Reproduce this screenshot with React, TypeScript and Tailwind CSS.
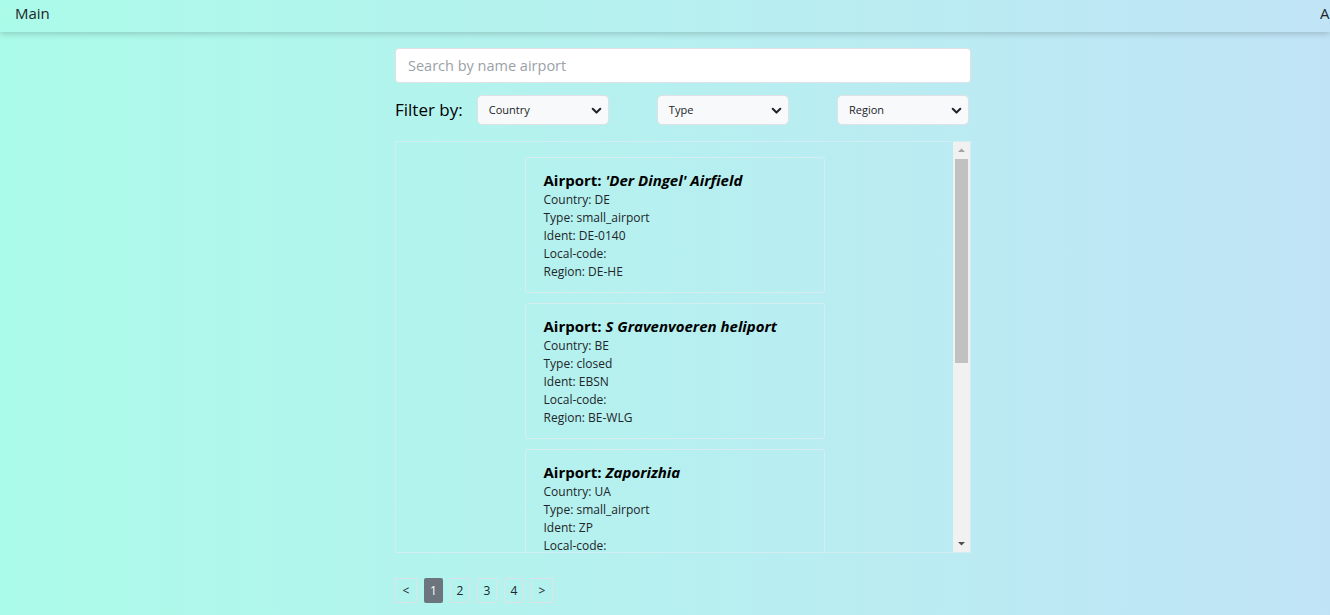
import React from "react";

type Airport = {
  name: string;
  country: string;
  type: string;
  ident: string;
  localCode: string;
  region: string;
};

const airports: Airport[] = [
  { name: "'Der Dingel' Airfield", country: "DE", type: "small_airport", ident: "DE-0140", localCode: "", region: "DE-HE" },
  { name: "S Gravenvoeren heliport", country: "BE", type: "closed", ident: "EBSN", localCode: "", region: "BE-WLG" },
  { name: "Zaporizhia", country: "UA", type: "small_airport", ident: "ZP", localCode: "", region: "UA-23" },
];

function Chevron() {
  return (
    <svg width="11" height="11" viewBox="0 0 16 16" className="shrink-0">
      <path d="M2.5 5.5l5.5 5.5 5.5-5.5" fill="none" stroke="#212529" strokeWidth="3" strokeLinecap="round" strokeLinejoin="round" />
    </svg>
  );
}

function FilterSelect({ label }: { label: string }) {
  return (
    <div className="w-[132px] h-[30px] flex items-center justify-between pl-[11px] pr-[6px] bg-[#f8f9fa] border border-[#dee2e6] rounded-[5px] text-[11px] text-[#212529]">
      <span>{label}</span>
      <Chevron />
    </div>
  );
}

function AirportCard({ a }: { a: Airport }) {
  return (
    <div className="w-[300px] h-[136px] shrink-0 border border-[#d6eef0] rounded-[3px] pl-[18px] pt-[12px]">
      <div className="text-[15px] font-bold leading-[20px] text-black">
        Airport: <i>{a.name}</i>
      </div>
      <div className="text-[12px] leading-[18px] text-[#212529] mt-[1px]">
        <div>Country: {a.country}</div>
        <div>Type: {a.type}</div>
        <div>Ident: {a.ident}</div>
        <div>Local-code: {a.localCode}</div>
        <div>Region: {a.region}</div>
      </div>
    </div>
  );
}

export default function App() {
  return (
    <div
      className="w-[1330px] h-[615px] overflow-hidden bg-gradient-to-r from-[#abfbe9] to-[#c0e4f6] text-[#212529]"
      style={{ fontFamily: "'Open Sans', 'Noto Sans', sans-serif" }}
    >
      {/* ------------------------ Header ------------------------ */}
      <header className="h-[32px] flex items-center justify-between pl-[15px] pr-0 pb-[6px] shadow-[0_2px_6px_rgba(0,0,0,0.18)] text-[15px] text-[#212529]">
        <span>Main</span>
        <span className="w-[10px] overflow-hidden">A</span>
      </header>

      <main className="ml-[395px] w-[576px] pt-[16px]">
        {/* search */}
        <div className="h-[35px] bg-white border border-[#dee2e6] rounded-[4px] flex items-center px-[12px] text-[14.5px] text-[#9ba1a7]">
          Search by name airport
        </div>

        {/* filters */}
        <div className="mt-[12px] flex items-center justify-between pr-[2px]">
          <div className="flex items-center gap-[14px]">
            <span className="text-[17px] text-black">Filter by:</span>
            <FilterSelect label="Country" />
          </div>
          <FilterSelect label="Type" />
          <FilterSelect label="Region" />
        </div>

        {/* list */}
        <div className="mt-[16px] h-[412px] border border-[#d3eef2] flex">
          <div className="flex-1 overflow-hidden flex flex-col items-center gap-[10px] pt-[15px]">
            {airports.map((a) => (
              <AirportCard key={a.ident} a={a} />
            ))}
          </div>
          <div className="w-[17px] bg-[#f1f1f1] flex flex-col items-center">
            <svg width="17" height="17" viewBox="0 0 17 17">
              <path d="M5 10h7L8.5 6.5z" fill="#a3a3a3" />
            </svg>
            <div className="w-[13px] h-[204px] bg-[#c1c1c1]" />
            <div className="flex-1" />
            <svg width="17" height="17" viewBox="0 0 17 17">
              <path d="M5 7h7L8.5 10.5z" fill="#505050" />
            </svg>
          </div>
        </div>

        {/* pagination */}
        <div className="mt-[25px] flex items-center gap-[7px] text-[12px]">
          <div className="w-[22px] h-[25px] flex items-center justify-center border border-[#dfe3e6]">&lt;</div>
          <div className="w-[19px] h-[25px] flex items-center justify-center rounded-[2px] bg-[#6c757d] text-white">1</div>
          <div className="w-[20px] h-[25px] flex items-center justify-center border border-[#dfe3e6] rounded-[2px]">2</div>
          <div className="w-[20px] h-[25px] flex items-center justify-center border border-[#dfe3e6] rounded-[2px]">3</div>
          <div className="w-[20px] h-[25px] flex items-center justify-center border border-[#dfe3e6] rounded-[2px]">4</div>
          <div className="w-[22px] h-[25px] flex items-center justify-center border border-[#dfe3e6]">&gt;</div>
        </div>
      </main>
    </div>
  );
}
